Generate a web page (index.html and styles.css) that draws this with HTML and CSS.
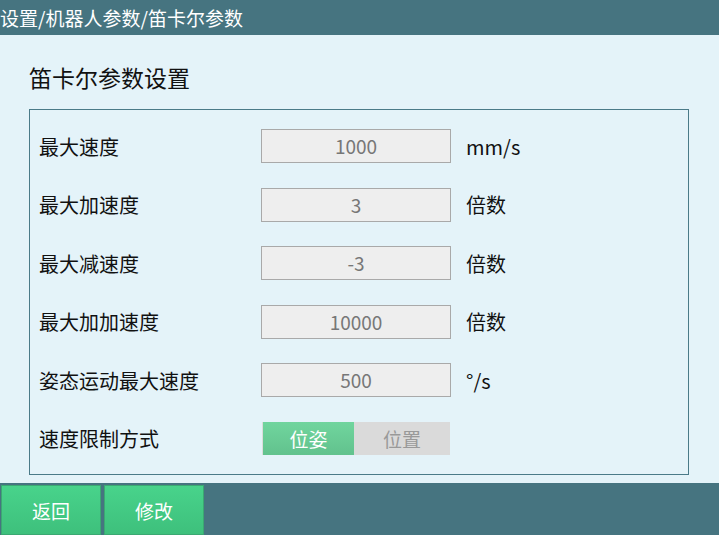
FILE: index.html
```html
<!DOCTYPE html>
<html>

<head>
    <meta charset="UTF-8">
    <link rel="stylesheet" href="styles.css">
    <title>笛卡尔参数</title>
</head>

<body>
    <div class="screen">
        <div class="top-bar">设置/机器人参数/笛卡尔参数</div>

        <div class="content">
            <div class="page-title">笛卡尔参数设置</div>
            <div class="param-panel">
                <div class="param-row">
                    <div class="param-label">最大速度</div>
                    <div class="param-input">1000</div>
                    <div class="param-unit">mm/s</div>
                </div>
                <div class="param-row">
                    <div class="param-label">最大加速度</div>
                    <div class="param-input">3</div>
                    <div class="param-unit">倍数</div>
                </div>
                <div class="param-row">
                    <div class="param-label">最大减速度</div>
                    <div class="param-input">-3</div>
                    <div class="param-unit">倍数</div>
                </div>
                <div class="param-row">
                    <div class="param-label">最大加加速度</div>
                    <div class="param-input">10000</div>
                    <div class="param-unit">倍数</div>
                </div>
                <div class="param-row">
                    <div class="param-label">姿态运动最大速度</div>
                    <div class="param-input">500</div>
                    <div class="param-unit">°/s</div>
                </div>
                <div class="param-row">
                    <div class="param-label">速度限制方式</div>
                    <div class="toggle">
                        <div class="toggle-item active">位姿</div>
                        <div class="toggle-item">位置</div>
                    </div>
                </div>
            </div>
        </div>

        <div class="bottom-bar">
            <button class="action-button">返回</button>
            <button class="action-button">修改</button>
        </div>
    </div>
</body>

</html>
```

FILE: styles.css
```css
html, body {
    margin: 0;
    padding: 0;
}

body {
    font-family: "Noto Sans CJK SC", "Noto Sans", sans-serif;
    background-color: #e4f3f9;
}

.screen {
    width: 719px;
    height: 535px;
    display: flex;
    flex-direction: column;
    overflow: hidden;
}

.top-bar {
    height: 35px;
    line-height: 35px;
    background-color: #467480;
    color: white;
    font-size: 19px;
    white-space: nowrap;
}

.content {
    flex: 1;
    padding-left: 29px;
}

.page-title {
    margin-top: 27px;
    height: 30px;
    line-height: 30px;
    font-size: 23px;
    color: #111;
}

.param-panel {
    margin-top: 17px;
    width: 660px;
    height: 366px;
    border: 1px solid #4a7a88;
    padding: 7px 0 0 9px;
    box-sizing: border-box;
}

.param-row {
    height: 58.5px;
    display: flex;
    align-items: center;
}

.param-label {
    width: 222px;
    font-size: 20px;
    color: #111;
}

.param-input {
    width: 188px;
    height: 32px;
    line-height: 32px;
    border: 1px solid #a9a9a9;
    background-color: #eeeeee;
    color: #777;
    text-align: center;
    font-size: 19px;
}

.param-unit {
    margin-left: 15px;
    font-size: 20px;
    color: #111;
}

.toggle {
    display: flex;
    margin-left: 1px;
    height: 33px;
}

.toggle-item {
    width: 96px;
    line-height: 33px;
    text-align: center;
    font-size: 19px;
    background-color: #dadada;
    color: #999;
}

.toggle-item.active {
    width: 91px;
    border-left: 1px solid #dcdcdc;
    background: linear-gradient(#70d59e, #62c28d);
    color: white;
}

.bottom-bar {
    height: 52px;
    background-color: #467480;
    display: flex;
    gap: 3px;
    padding: 2px 0 0 1px;
    box-sizing: border-box;
}

.action-button {
    width: 100px;
    height: 50px;
    border: 1px solid #3ba872;
    background: linear-gradient(#48d38b, #3ec07c);
    color: white;
    font-family: "Noto Sans CJK SC", "Noto Sans", sans-serif;
    font-size: 19px;
    padding: 0;
    cursor: pointer;
}
```
